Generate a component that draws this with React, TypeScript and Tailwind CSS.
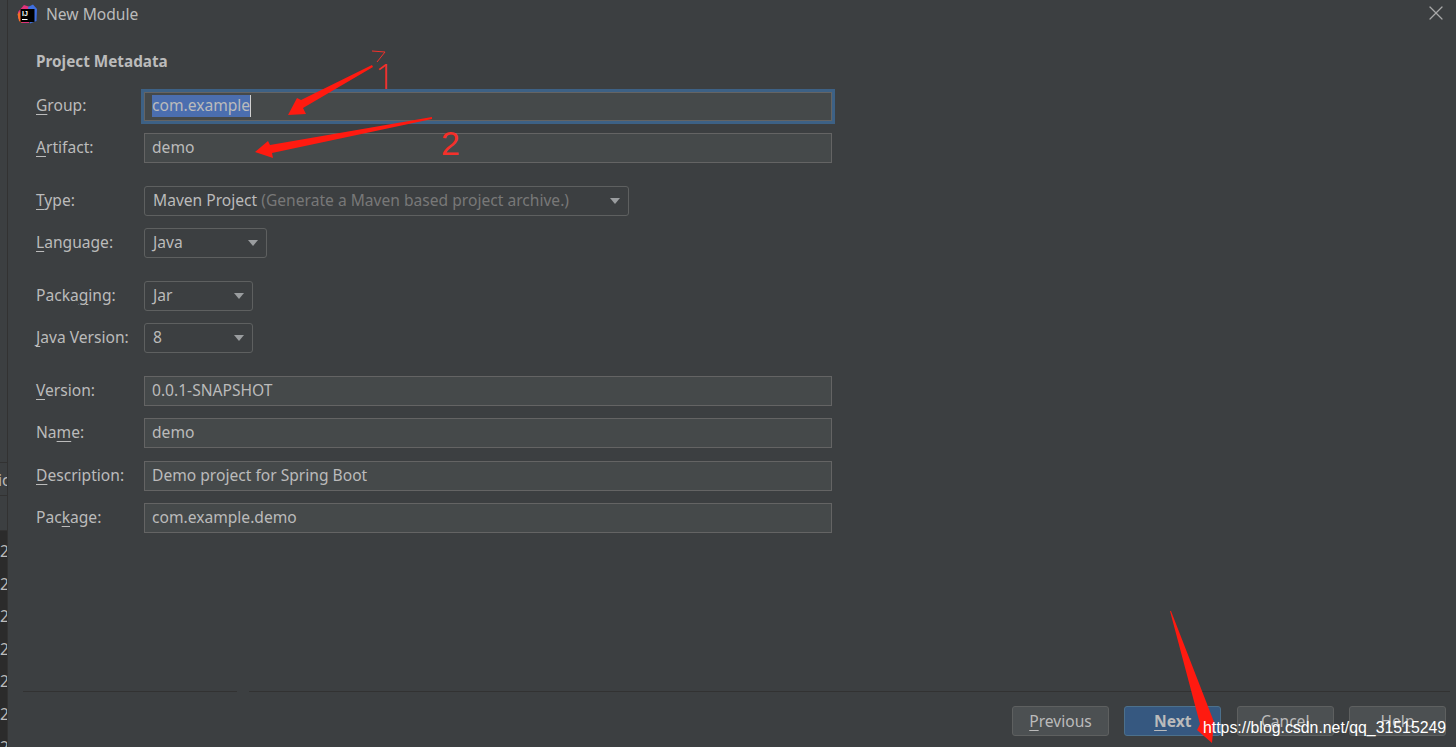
import { X } from 'lucide-react';

const uiFont = "font-['Noto_Sans','Open_Sans',sans-serif]";

function Mn({ children }: { children: string }) {
  return <span className="underline decoration-1 underline-offset-[3px]">{children}</span>;
}

function Field({ label, value, className = '' }: { label: React.ReactNode; value: string; className?: string }) {
  return (
    <div className={`flex items-center h-[30px] ${className}`}>
      <div className="w-[108px] shrink-0 pb-[1px]">{label}</div>
      <div className="w-[688px] h-[30px] bg-[#45494a] border border-[#646464] px-[7px] pb-[1px] flex items-center">{value}</div>
    </div>
  );
}

function Select({ label, width, children, className = '' }: { label: React.ReactNode; width: string; children: React.ReactNode; className?: string }) {
  return (
    <div className={`flex items-center h-[30px] ${className}`}>
      <div className="w-[108px] shrink-0 pb-[1px]">{label}</div>
      <div className={`${width} h-[30px] border border-[#5e6060] rounded-[3px] pl-[8px] pr-[8px] flex items-center justify-between`}>
        <span className="pb-[1px]">{children}</span>
        <span className="w-0 h-0 border-x-[5px] border-x-transparent border-t-[6px] border-t-[#9a9d9f]" />
      </div>
    </div>
  );
}

function Btn({ children, primary = false }: { children: React.ReactNode; primary?: boolean }) {
  return (
    <div
      className={`w-[97px] h-[30px] pt-[1px] rounded-[3px] border flex items-center justify-center ${
        primary ? 'bg-[#365880] border-[#4c708c] font-bold' : 'bg-[#4c5052] border-[#5e6060]'
      }`}
    >
      {children}
    </div>
  );
}

export default function App() {
  return (
    <main className={`relative flex w-[1456px] h-[747px] overflow-hidden bg-[#3c3f41] text-[#bbbbbb] text-[15.6px] ${uiFont}`}>
      {/* bit of the IDE showing behind the dialog */}
      <div className="w-[8px] shrink-0 h-full flex flex-col border-r border-[#323232] overflow-hidden">
        <div className="h-[462px] shrink-0" />
        <div className="h-[34px] shrink-0 border-y border-[#323232] -ml-[2px] leading-[34px] whitespace-nowrap">ic</div>
        <div className="h-[35px] shrink-0 border-b border-[#323232]" />
        <div className="flex-1 bg-[#2b2b2b] flex flex-col pt-[9px] gap-[10.6px] leading-[22px] whitespace-nowrap">
          <div>2</div>
          <div>2</div>
          <div>2</div>
          <div>2</div>
          <div>2</div>
          <div>2</div>
          <div>2</div>
        </div>
      </div>

      <div className="flex-1 flex flex-col min-w-0">
        <div className="h-[29px] shrink-0 flex items-center pl-[9px] pr-[10px]">
          <svg width="21" height="21" viewBox="0 0 21 21" className="shrink-0">
            <path d="M1 8 L7 1 L13 3 L12 19 L5 19 L1 14 Z" fill="#e0317a" />
            <path d="M11 3 L16 0.5 L20 5 L19.5 17 L13 19.5 Z" fill="#3f6fe0" />
            <path d="M0.5 10 L2 17 L5 19 L4 7 Z" fill="#f5702a" />
            <rect x="3.5" y="5" width="14" height="13" fill="#000" />
            <text x="5" y="11.5" fill="#fff" fontSize="7" fontWeight="700" fontFamily="Liberation Sans, sans-serif">IJ</text>
            <rect x="5" y="15" width="5.5" height="1" fill="#fff" />
          </svg>
          <span className="ml-[8px] flex-1">New Module</span>
          <X size={24} strokeWidth={1.2} className="text-[#a8a8a8] -mt-[3px] -mr-[2px]" />
        </div>

        <div className="flex-1 pl-[28px] pt-[22px]">
          <div className="font-bold text-[15.3px] leading-[20px]">Project Metadata</div>
          <div className="flex items-center h-[30px] mt-[20px]">
            <div className="w-[108px] shrink-0 pb-[1px]">
              <Mn>G</Mn>roup:
            </div>
            <div className="w-[688px] h-[29px] bg-[#45494a] border border-[#646464] px-[7px] flex items-center outline-[3px] outline-[#3d6185]">
              <span className="bg-[#4b6eaf] border-r border-[#d0d0d0] h-[22px] leading-[20px]">com.example</span>
            </div>
          </div>
          <Field label={<><Mn>A</Mn>rtifact:</>} value="demo" className="mt-[12px]" />
          <Select label={<><Mn>T</Mn>ype:</>} width="w-[485px]" className="mt-[23px]">
            Maven Project <span className="text-[#787878]">(Generate a Maven based project archive.)</span>
          </Select>
          <Select label={<><Mn>L</Mn>anguage:</>} width="w-[123px]" className="mt-[12px]">Java</Select>
          <Select label={<>Packa<Mn>g</Mn>ing:</>} width="w-[109px]" className="mt-[23px]">Jar</Select>
          <Select label={<><Mn>J</Mn>ava Version:</>} width="w-[109px]" className="mt-[12px]">8</Select>
          <Field label={<><Mn>V</Mn>ersion:</>} value="0.0.1-SNAPSHOT" className="mt-[23px]" />
          <Field label={<>Na<Mn>m</Mn>e:</>} value="demo" className="mt-[12px]" />
          <Field label={<><Mn>D</Mn>escription:</>} value="Demo project for Spring Boot" className="mt-[13px]" />
          <Field label={<>Pac<Mn>k</Mn>age:</>} value="com.example.demo" className="mt-[12px]" />
        </div>

        <div className="h-[56px] shrink-0 ml-[15px] mr-[6px] border-t border-[#323232] flex justify-end gap-[15.33px] pt-[14px] pr-[4px]">
          <Btn><span><Mn>P</Mn>revious</span></Btn>
          <Btn primary><span><Mn>N</Mn>ext</span></Btn>
          <Btn>Cancel</Btn>
          <Btn>Help</Btn>
        </div>
      </div>

      {/* red annotations pasted over the dialog */}
      <svg className="absolute inset-0 pointer-events-none" width="1456" height="747" viewBox="0 0 1456 747">
        <path d="M372 51 L385 52 L377 62" fill="none" stroke="#f5302a" strokeWidth="1" />
        <path d="M372 65 L301 100 L297 98 L288 115 L306 114 L303 108 L373 67 Z" fill="#ff1a10" />
        <path d="M432 117 L270 145 L268 141 L255 152 L273 158 L272 153 L432 119 Z" fill="#ff1a10" />
        <path d="M1170 611 L1200 724 L1197 730 L1212 743 L1214 722 L1171 611 Z" fill="#ff1a10" />
      </svg>
      <span className="absolute left-[375px] top-[56px] text-[35px] leading-[40px] text-[#f5302a] font-['Open_Sans',sans-serif] font-light">1</span>
      <span className="absolute left-[441px] top-[123px] text-[34px] leading-[40px] text-[#f5302a] font-['Liberation_Sans',sans-serif] font-light">2</span>
      <span className="absolute left-[1203px] top-[719px] text-[15.85px] leading-[18px] text-white font-['Liberation_Sans',sans-serif]">https://blog.csdn.net/qq_31515249</span>
      {/* small break in the footer rule */}
      <span className="absolute left-[237px] top-[691px] w-[12px] h-px bg-[#3c3f41]" />
    </main>
  );
}
